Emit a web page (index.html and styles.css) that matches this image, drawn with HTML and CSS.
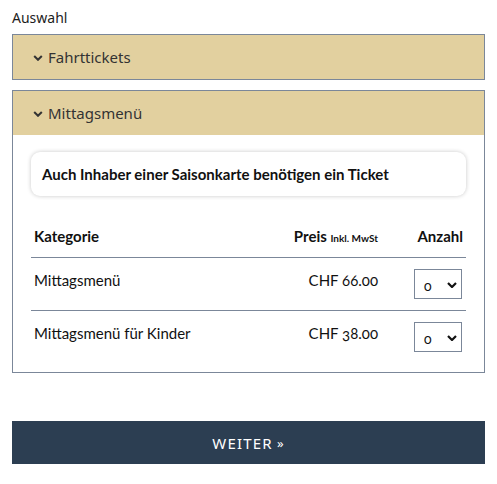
FILE: index.html
```html
<!DOCTYPE html>
<html lang="de">
<head>
<meta charset="utf-8">
<link rel="stylesheet" href="styles.css">
</head>
<body>
<div class="page">
  <div class="label">Auswahl</div>
  <div class="panel">
    <div class="panel-head">
      <svg class="chev" viewBox="0 0 10 6" width="10" height="6"><path d="M1.2 1 L5 4.8 L8.8 1" fill="none" stroke="#333" stroke-width="2"/></svg>
      <span>Fahrttickets</span>
    </div>
  </div>
  <div class="panel">
    <div class="panel-head">
      <svg class="chev" viewBox="0 0 10 6" width="10" height="6"><path d="M1.2 1 L5 4.8 L8.8 1" fill="none" stroke="#333" stroke-width="2"/></svg>
      <span>Mittagsmenü</span>
    </div>
    <div class="panel-body">
      <div class="alert">Auch Inhaber einer Saisonkarte benötigen ein Ticket</div>
      <table class="tbl">
        <colgroup>
          <col>
          <col class="w-price">
          <col class="w-qty">
        </colgroup>
        <thead>
          <tr>
            <th class="c-cat">Kategorie</th>
            <th class="c-price">Preis <small>Inkl. MwSt</small></th>
            <th class="c-qty">Anzahl</th>
          </tr>
        </thead>
        <tbody>
          <tr>
            <td class="c-cat">Mittagsmenü</td>
            <td class="c-price">CHF 66.00</td>
            <td class="c-qty"><div class="sel"><span>0</span><svg viewBox="0 0 10 6" width="10" height="6"><path d="M1 1 L5 5 L9 1" fill="none" stroke="#111" stroke-width="2.2"/></svg></div></td>
          </tr>
          <tr>
            <td class="c-cat">Mittagsmenü für Kinder</td>
            <td class="c-price">CHF 38.00</td>
            <td class="c-qty"><div class="sel"><span>0</span><svg viewBox="0 0 10 6" width="10" height="6"><path d="M1 1 L5 5 L9 1" fill="none" stroke="#111" stroke-width="2.2"/></svg></div></td>
          </tr>
        </tbody>
      </table>
    </div>
  </div>
  <div class="btn">WEITER <span class="raq">»</span></div>
</div>
</body>
</html>
```
FILE: styles.css
```css
* { box-sizing: border-box; }
html, body { margin: 0; padding: 0; background: #fff; }
.page {
  padding: 8px 12px 0 12px;
  font-family: "Noto Sans", "Open Sans", sans-serif;
  color: #222;
}
.label {
  font-size: 14px;
  line-height: 20px;
  color: #1d1d1d;
  margin-bottom: 6px;
}
.panel {
  border: 1px solid #7b8799;
  margin-bottom: 10px;
}
.panel-head {
  background: #e2d09f;
  height: 44px;
  display: flex;
  align-items: center;
  padding-left: 20px;
  font-size: 15px;
  color: #333;
}
.chev { margin-right: 5px; margin-top: 1px; }
.panel-body {
  padding: 17px 18px 9px 18px;
  font-family: "Lato", "Noto Sans", sans-serif;
}
.alert {
  border-radius: 9px;
  box-shadow: 0 0 4px rgba(0,0,0,0.22);
  height: 44px;
  display: flex;
  align-items: center;
  padding-left: 11px;
  font-weight: 700;
  font-size: 15px;
  color: #111;
  margin-bottom: 25px;
}
.tbl {
  width: 100%;
  border-collapse: collapse;
  table-layout: fixed;
  font-size: 15px;
  color: #111;
}
.w-price { width: 170px; }
.w-qty { width: 88px; }
.tbl th {
  font-weight: 700;
  height: 36px;
  vertical-align: top;
  padding: 6px 0 0 0;
  white-space: nowrap;
  border-bottom: 1px solid #7b8799;
}
.tbl th small { font-size: 10px; font-weight: 700; }
.tbl td {
  height: 53px;
  vertical-align: top;
  padding: 13px 0 0 0;
  white-space: nowrap;
  font-variant-numeric: oldstyle-nums;
}
.tbl tbody tr:first-child td { border-bottom: 1px solid #7b8799; }
.tbl .c-cat { text-align: left; padding-left: 3px; }
.tbl .c-price { text-align: right; padding-right: 0; }
.tbl .c-qty { text-align: right; padding-right: 4px; }
.tbl th.c-qty { padding-right: 3px; }
.tbl td.c-qty { padding-top: 11px; }
.sel {
  display: inline-flex;
  width: 48px;
  height: 30px;
  border: 1px solid #7b8799;
  align-items: center;
  justify-content: space-between;
  padding: 3px 4px 0 9px;
  font-size: 14px;
  background: #fff;
  vertical-align: top;
}
.btn {
  margin-top: 48px;
  background: #2c3e52;
  color: #fff;
  height: 43px;
  display: flex;
  align-items: center;
  justify-content: center;
  font-family: "Noto Sans", sans-serif;
  font-size: 15px;
  letter-spacing: 1.2px;
}
.raq { font-size: 13px; margin-left: 4px; }
```
